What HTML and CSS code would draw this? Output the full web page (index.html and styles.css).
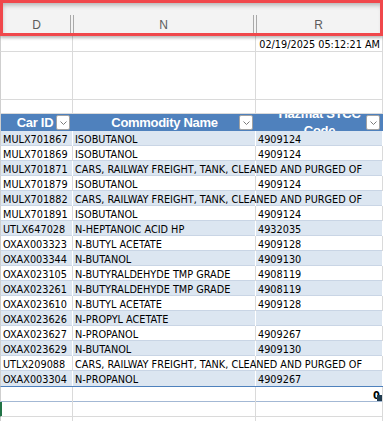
FILE: index.html
```html
<!DOCTYPE html>
<html>
<head>
<meta charset="utf-8">
<link rel="stylesheet" href="styles.css">
</head>
<body>
<div class="colhead">
  <div class="lab">D</div>
  <div class="sep"></div>
  <div class="lab">N</div>
  <div class="sep"></div>
  <div class="lab">R</div>
</div>
<div class="grid">
  <div class="row h16"><div class="c"></div><div class="c"></div><div class="c right">02/19/2025 05:12:21 AM</div></div>
  <div class="row h48"><div class="c"></div><div class="c"></div><div class="c"></div></div>
  <div class="row h14"><div class="c"></div><div class="c"></div><div class="c"></div></div>
  <div class="row thead">
    <div class="hc"><span class="ht pr">Car ID</span><span class="dd"><svg width="7" height="4" viewBox="0 0 7 4"><path d="M0.5 0.5l3 3 3-3" fill="none" stroke="#7b7b7b" stroke-width="1"/></svg></span></div>
    <div class="hc"><span class="ht">Commodity Name</span><span class="dd"><svg width="7" height="4" viewBox="0 0 7 4"><path d="M0.5 0.5l3 3 3-3" fill="none" stroke="#7b7b7b" stroke-width="1"/></svg></span></div>
    <div class="hc"><span class="ht two">Hazmat STCC<br>Code</span><span class="dd"><svg width="7" height="4" viewBox="0 0 7 4"><path d="M0.5 0.5l3 3 3-3" fill="none" stroke="#7b7b7b" stroke-width="1"/></svg></span></div>
  </div>
  <div class="row d band"><div class="c">MULX701867</div><div class="c">ISOBUTANOL</div><div class="c">4909124</div></div>
  <div class="row d"><div class="c">MULX701869</div><div class="c">ISOBUTANOL</div><div class="c">4909124</div></div>
  <div class="row d band"><div class="c">MULX701871</div><div class="c">CARS, RAILWAY FREIGHT, TANK, CLEANED AND PURGED OF</div><div class="c"></div></div>
  <div class="row d"><div class="c">MULX701879</div><div class="c">ISOBUTANOL</div><div class="c">4909124</div></div>
  <div class="row d band"><div class="c">MULX701882</div><div class="c">CARS, RAILWAY FREIGHT, TANK, CLEANED AND PURGED OF</div><div class="c"></div></div>
  <div class="row d"><div class="c">MULX701891</div><div class="c">ISOBUTANOL</div><div class="c">4909124</div></div>
  <div class="row d band"><div class="c">UTLX647028</div><div class="c">N-HEPTANOIC ACID HP</div><div class="c">4932035</div></div>
  <div class="row d"><div class="c">OXAX003323</div><div class="c">N-BUTYL ACETATE</div><div class="c">4909128</div></div>
  <div class="row d band"><div class="c">OXAX003344</div><div class="c">N-BUTANOL</div><div class="c">4909130</div></div>
  <div class="row d"><div class="c">OXAX023105</div><div class="c">N-BUTYRALDEHYDE TMP GRADE</div><div class="c">4908119</div></div>
  <div class="row d band"><div class="c">OXAX023261</div><div class="c">N-BUTYRALDEHYDE TMP GRADE</div><div class="c">4908119</div></div>
  <div class="row d"><div class="c">OXAX023610</div><div class="c">N-BUTYL ACETATE</div><div class="c">4909128</div></div>
  <div class="row d band"><div class="c">OXAX023626</div><div class="c">N-PROPYL ACETATE</div><div class="c"></div></div>
  <div class="row d"><div class="c">OXAX023627</div><div class="c">N-PROPANOL</div><div class="c">4909267</div></div>
  <div class="row d band"><div class="c">OXAX023629</div><div class="c">N-BUTANOL</div><div class="c">4909130</div></div>
  <div class="row d"><div class="c">UTLX209088</div><div class="c">CARS, RAILWAY FREIGHT, TANK, CLEANED AND PURGED OF</div><div class="c"></div></div>
  <div class="row d band last"><div class="c">OXAX003304</div><div class="c">N-PROPANOL</div><div class="c">4909267</div></div>
  <div class="row total"><div class="c"></div><div class="c"></div><div class="c right sum">0<span class="handle"></span></div></div>
  <div class="row sel"><div class="c"></div><div class="c"></div><div class="c"></div></div>
  <div class="row h15"><div class="c"></div><div class="c"></div><div class="c"></div></div>
</div>
</body>
</html>
```
FILE: styles.css
```css
html, body {
  margin: 0;
  padding: 0;
  background: #ffffff;
}
body {
  width: 383px;
  height: 421px;
  overflow: hidden;
  font-family: "Liberation Sans", Arial, sans-serif;
}

/* column letters header with red highlight */
.colhead {
  position: relative;
  z-index: 1;
  width: 383px;
  height: 36px;
  box-sizing: border-box;
  border: 3px solid #f0474b;
  background: #f3f3f3;
  box-shadow: inset 1px 4px 5px -2px rgba(0, 0, 0, 0.28), 0 2px 3px rgba(0, 0, 0, 0.28);
  display: grid;
  grid-template-columns: 67px 4px 179px 4px 1fr;
  align-items: end;
}
.colhead .lab {
  text-align: center;
  font-size: 12px;
  line-height: 14px;
  color: #5c5c5c;
  padding-bottom: 1px;
}
.colhead .sep {
  height: 18px;
  box-sizing: border-box;
  border-left: 1px solid #a9a9a9;
  border-right: 1px solid #a9a9a9;
}

/* sheet grid */
.row {
  display: grid;
  grid-template-columns: 72px 183px 127px;
  box-sizing: border-box;
  border-left: 1px solid #cfcfcf;
  border-bottom: 1px solid #dadada;
  font-family: "DejaVu Sans Condensed", "DejaVu Sans", sans-serif;
  font-stretch: condensed;
  font-size: 10.8px;
  color: #000;
}
.c {
  box-sizing: border-box;
  border-right: 1px solid #dadada;
  padding: 3px 0 0 2px;
  line-height: 12px;
  white-space: nowrap;
  min-width: 0;
}
.c.right {
  text-align: right;
  padding-right: 2px;
}
.h16 { height: 16px; }
.h48 { height: 48px; }
.h14 { height: 14px; }
.h15 { height: 15px; }

.thead {
  height: 17px;
  background: #4f81bd;
  border-bottom: 0;
}
.hc {
  display: grid;
  overflow: hidden;
  padding: 0;
  border-right: 0;
}
.hc > * {
  grid-area: 1 / 1;
}
.ht {
  text-align: center;
  color: #fff;
  font-family: "Liberation Sans", Arial, sans-serif;
  font-stretch: normal;
  font-weight: bold;
  font-size: 13px;
  letter-spacing: -0.3px;
  line-height: 17px;
}
.ht.pr { padding-right: 4px; }
.ht.two { margin-top: -9px; }
.dd {
  justify-self: end;
  align-self: start;
  width: 14px;
  height: 15px;
  margin: 1px 3px 0 0;
  box-sizing: border-box;
  background: #fff;
  border: 1px solid #a3a3a3;
  border-radius: 2px;
  display: flex;
  align-items: center;
  justify-content: center;
}
.dd svg { display: block; }

.d {
  height: 15px;
  border-bottom-color: #c9d5e5;
}
.band {
  background: #dce6f1;
}
.band .c {
  border-right-color: #ffffff;
}
.d.last {
  height: 16px;
  border-bottom-color: #4f81bd;
}
.total {
  height: 15px;
  border-bottom-color: #a3b8d4;
}
.sum {
  position: relative;
  font-weight: bold;
  font-size: 11px;
  padding-right: 5px;
}
.handle {
  position: absolute;
  right: 0;
  bottom: 1px;
  width: 5px;
  height: 6px;
  background: #1f3b4f;
}
.sel {
  height: 15px;
  border-left-color: #217346;
}
.sel .c:first-child {
  box-shadow: inset 1px 0 0 #217346;
}
```
